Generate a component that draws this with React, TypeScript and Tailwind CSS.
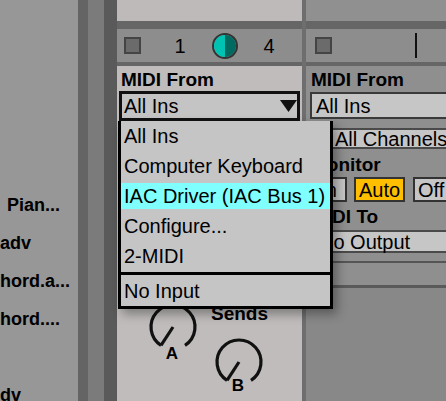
import React from "react";

const tracks = [
  { name: "Pian...", pad: "pr-[18px]" },
  { name: "adv", pad: "pr-[47px]" },
  { name: "hord.a...", pad: "pr-[8px]" },
  { name: "hord....", pad: "pr-[18px]" },
  { name: "", pad: "pr-[18px]" },
  { name: "dv", pad: "pr-[57px]" },
];

const menuItems = ["All Ins", "Computer Keyboard", "IAC Driver (IAC Bus 1)", "Configure...", "2-MIDI"];

function Knob({ cx, cy, r = 22 }: { cx: number; cy: number; r?: number }) {
  const dx = r * Math.sin((33 * Math.PI) / 180);
  const dy = r * Math.cos((33 * Math.PI) / 180);
  return (
    <g stroke="#111" strokeWidth={3.2} fill="none" strokeLinecap="butt">
      <path d={`M ${cx - dx} ${cy + dy} A ${r} ${r} 0 1 1 ${cx + dx} ${cy + dy}`} />
      <path d={`M ${cx} ${cy} L ${cx - dx} ${cy + dy}`} />
    </g>
  );
}

function SendsArea() {
  return (
    <div className="relative h-[101px] shrink-0">
      <svg className="absolute inset-0" width={185} height={101} viewBox="0 0 185 101">
        <Knob cx={56} cy={27} />
        <Knob cx={122} cy={62} />
      </svg>
      <span className="absolute left-[94px] top-[3px] font-bold text-[19px] leading-[22px]">Sends</span>
      <span className="absolute left-[55px] top-[53px] -translate-x-1/2 -translate-y-1/2 font-bold text-[17px] leading-none">
        A
      </span>
      <span className="absolute left-[121px] top-[85px] -translate-x-1/2 -translate-y-1/2 font-bold text-[17px] leading-none">
        B
      </span>
    </div>
  );
}

export default function App() {
  return (
    <div className="relative flex w-[446px] h-[401px] overflow-hidden text-black font-['Liberation_Sans',Arial,sans-serif]">
      {/* track list */}
      <div className="w-[78px] shrink-0 bg-[#979797] pt-[186px] flex flex-col">
        {tracks.map((t, i) => (
          <div key={i} className={`h-[38px] shrink-0 flex items-center justify-end ${t.pad}`}>
            <span className="whitespace-nowrap font-bold text-[18px] leading-[22px]">{t.name}</span>
          </div>
        ))}
      </div>
      <div className="w-[10px] shrink-0 bg-[#646464]" />
      <div className="w-[16px] shrink-0 bg-[#7b7b7b]" />
      <div className="w-[13px] shrink-0 bg-[#5a5a5a]" />

      {/* selected track */}
      <div className="w-[185px] shrink-0 flex flex-col">
        <div className="h-[21px] shrink-0 bg-[#bebab9]" />
        <div className="h-[8px] shrink-0 bg-[#666]" />
        <div className="h-[33px] shrink-0 bg-[#8d8d8d] flex items-center">
          <div className="ml-[7px] w-[17px] h-[17px] border-2 border-[#444] bg-[#6b6b6b]" />
          <span className="ml-[19px] w-[40px] text-center text-[20px] leading-none">1</span>
          <div className="ml-[12px] w-[26px] h-[26px] rounded-full border-2 border-[#333] overflow-hidden flex">
            <div className="w-1/2 bg-[#00c2b2]" />
            <div className="w-1/2 bg-[#006a60]" />
          </div>
          <span className="ml-[11px] w-[40px] text-center text-[20px] leading-none">4</span>
        </div>
        <div className="h-[4px] shrink-0 bg-[#666]" />
        <div className="flex-1 bg-[#bfbcbb] flex flex-col">
          <div className="mt-[3px] pl-[4px] h-[22px] shrink-0 font-bold text-[19px] leading-[22px]">MIDI From</div>
          <div className="ml-[2px] w-[181px] h-[30px] shrink-0 border-[3px] border-[#111] bg-[#c4c4c4] flex items-center justify-between pl-[2px]">
            <span className="text-[20px] leading-none">All Ins</span>
            <svg width={17} height={12} viewBox="0 0 17 12">
              <polygon points="0,0 17,0 8.5,12" fill="#111" />
            </svg>
          </div>
          <div className="h-[179px] shrink-0" />
          <SendsArea />
        </div>
      </div>

      <div className="w-[4px] shrink-0 bg-[#6e6e6e]" />

      {/* next track */}
      <div className="flex-1 flex flex-col bg-[#8f8f8f]">
        <div className="h-[21px] shrink-0 bg-[#909090]" />
        <div className="h-[8px] shrink-0 bg-[#666]" />
        <div className="h-[33px] shrink-0 bg-[#8d8d8d] flex items-center">
          <div className="ml-[9px] w-[17px] h-[17px] border-2 border-[#444] bg-[#6b6b6b]" />
          <div className="ml-[83px] w-[2px] h-[25px] bg-[#111]" />
        </div>
        <div className="h-[4px] shrink-0 bg-[#666]" />
        <div className="flex-1 flex flex-col text-[20px]">
          <div className="mt-[3px] pl-[5px] h-[22px] shrink-0 font-bold text-[19px] leading-[22px]">MIDI From</div>
          <div className="mt-[1px] ml-[4px] w-[150px] h-[27px] shrink-0 border-2 border-[#3a3a3a] bg-[#c6c6c6] flex items-center pl-[4px] leading-none">
            All Ins
          </div>
          <div className="mt-[9px] ml-[4px] w-[150px] h-[21px] shrink-0 border-2 border-[#4a4a4a] bg-[#c6c6c6] flex items-center pl-[23px] leading-none">
            All Channels
          </div>
          <div className="mt-[5px] pl-[5px] h-[22px] shrink-0 font-bold text-[19px] leading-[22px]">Monitor</div>
          <div className="mt-[1px] h-[25px] shrink-0 flex">
            <div className="ml-[4px] w-[37px] shrink-0 border-2 border-[#333] bg-[#c6c6c6] flex items-center justify-center leading-none">In</div>
            <div className="ml-[7px] w-[51px] shrink-0 border-2 border-[#333] bg-[#ffbf00] flex items-center justify-center leading-none">Auto</div>
            <div className="ml-[8px] w-[48px] shrink-0 border-2 border-[#333] bg-[#c6c6c6] flex items-center pl-[3px] leading-none">Off</div>
          </div>
          <div className="mt-[4px] pl-[5px] h-[22px] shrink-0 font-bold text-[19px] leading-[22px]">MIDI To</div>
          <div className="mt-[2px] ml-[4px] w-[150px] h-[23px] shrink-0 border-2 border-[#4a4a4a] bg-[#c6c6c6] flex items-center pl-[7px] leading-none">
            No Output
          </div>
          <div className="mt-[8px] h-[2px] shrink-0 bg-[#555]" />
          <div className="h-[22px] shrink-0" />
          <div className="h-[3px] shrink-0 bg-[#5a5a5a]" />
          <div className="flex-1 bg-[#888]" />
        </div>
      </div>

      {/* open dropdown menu */}
      <div className="absolute left-[118px] top-[121px] w-[215px] border-[3px] border-t-0 border-black bg-[#c5c5c5] shadow-[4px_5px_10px_rgba(0,0,0,0.35)] text-[20px]">
        {menuItems.map((item, i) => (
          <div key={item} className="h-[30px] flex items-center">
            <div className={`w-full h-[26px] flex items-center pl-[3px] leading-none ${i === 2 ? "bg-[#80ffff]" : ""}`}>
              {item}
            </div>
          </div>
        ))}
        <div className="mt-[1px] h-[3px] bg-black" />
        <div className="h-[31px] flex items-center pl-[3px] leading-none">No Input</div>
      </div>
    </div>
  );
}
